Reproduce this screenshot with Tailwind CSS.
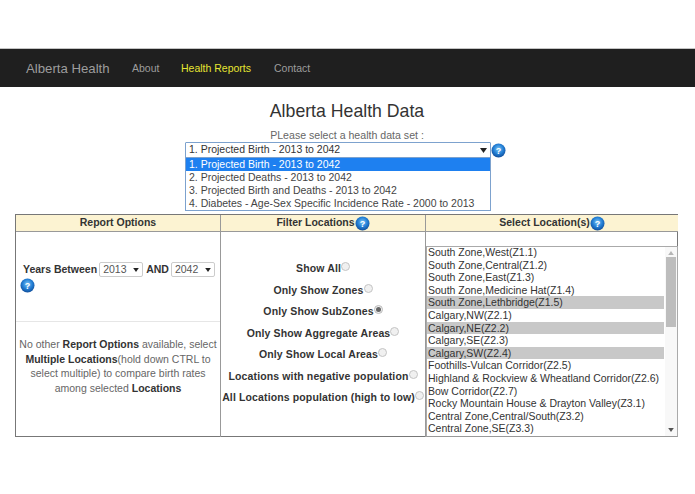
<!DOCTYPE html>
<html lang="en">
  <head>
    <meta charset="UTF-8" />
    <title>Alberta Health Data</title>
    <script src="https://cdn.jsdelivr.net/npm/@tailwindcss/browser@4"></script>
  </head>
  <body class="bg-white font-['Liberation_Sans',Arial,sans-serif] text-[#333] w-[695px] h-[494px] overflow-hidden">
    <!-- Navbar -->
    <nav class="mt-[48px] h-[39px] bg-[#1f1f1f] border-t border-[#c4c4c4] flex items-center pt-[1px] pl-[26px] text-[#9d9d9d] text-[10.5px]">
      <a class="text-[13.2px] w-[106px]">Alberta Health</a>
      <a class="w-[49px]">About</a>
      <a class="w-[93px] text-[#e6e632]">Health Reports</a>
      <a>Contact</a>
    </nav>

    <!-- Heading -->
    <h1 class="mt-[14px] text-center text-[17.7px] leading-[20px] pr-[1px]">Alberta Health Data</h1>
    <p class="mt-[8px] text-center text-[10.6px] leading-[13px] text-[#666] pr-[1px]">PLease select a health data set :</p>

    <!-- Data set select -->
    <div class="relative ml-[185px] h-[16px] w-[306px]">
      <div class="h-[16px] border border-[#7da2ce] rounded-t-[1px] flex items-center justify-between pl-[3px] pr-[3px] text-[10.5px] text-[#333]">
        <span>1. Projected Birth - 2013 to 2042</span>
        <svg width="7" height="5" viewBox="0 0 7 5"><path d="M0 0h7L3.5 5z" fill="#222" /></svg>
      </div>
      <svg class="absolute left-[306px] top-[1px]" width="15" height="15" viewBox="0 0 15 15">
        <defs>
          <radialGradient id="q1" cx="50%" cy="40%" r="62%"><stop offset="0%" stop-color="#7cc6f5" /><stop offset="55%" stop-color="#2480d6" /><stop offset="100%" stop-color="#0f4a96" /></radialGradient>
        </defs>
        <circle cx="7.5" cy="7.5" r="7" fill="url(#q1)" />
        <text x="7.5" y="10.5" text-anchor="middle" font-size="9" font-weight="700" font-family="Liberation Sans" fill="#fff">?</text>
      </svg>
      <ul class="absolute left-0 top-[15px] w-[306px] h-[54px] bg-white border border-[#7da2ce] text-[10.5px] leading-[13px] text-[#444]">
        <li class="h-[13px] pl-[3px] bg-[#1e80f0] text-white">1. Projected Birth - 2013 to 2042</li>
        <li class="h-[13px] pl-[3px]">2. Projected Deaths - 2013 to 2042</li>
        <li class="h-[13px] pl-[3px]">3. Projected Birth and Deaths - 2013 to 2042</li>
        <li class="h-[13px] pl-[3px]">4. Diabetes - Age-Sex Specific Incidence Rate - 2000 to 2013</li>
      </ul>
    </div>

    <!-- Main table -->
    <div class="mt-[56px] ml-[15px] w-[663px] h-[223px] border border-[#777] grid grid-cols-[205px_205px_1fr] grid-rows-[17px_1fr] text-[10.5px]">
      <!-- Header row -->
      <div class="bg-[#fcf3d2] border-b border-[#999] border-r flex items-center justify-center font-bold text-[#333]">Report Options</div>
      <div class="bg-[#fcf3d2] border-b border-[#999] border-r flex items-center justify-center font-bold text-[#333]">
        Filter Locations
        <svg width="15" height="15" viewBox="0 0 15 15">
          <circle cx="7.5" cy="7.5" r="7" fill="url(#q1)" />
          <text x="7.5" y="10.5" text-anchor="middle" font-size="9" font-weight="700" font-family="Liberation Sans" fill="#fff">?</text>
        </svg>
      </div>
      <div class="bg-[#fcf3d2] border-b border-[#999] flex items-center justify-center font-bold text-[#333]">
        Select Location(s)
        <svg width="15" height="15" viewBox="0 0 15 15">
          <circle cx="7.5" cy="7.5" r="7" fill="url(#q1)" />
          <text x="7.5" y="10.5" text-anchor="middle" font-size="9" font-weight="700" font-family="Liberation Sans" fill="#fff">?</text>
        </svg>
      </div>

      <!-- Report options -->
      <div class="border-r border-[#999] flex flex-col">
        <div class="h-[90px] border-b border-[#e6e6e6] pl-[6px] pt-[30px]">
          <div class="flex items-center pl-[1px] h-[15px] font-bold whitespace-nowrap">
            <span>Years Between</span>
            <span class="ml-[2px] w-[44px] h-[15px] border border-[#ccc] rounded-[2px] flex items-center justify-between px-[3px] font-normal text-[#555]">2013<svg width="6" height="4" viewBox="0 0 7 5"><path d="M0 0h7L3.5 5z" fill="#222" /></svg></span>
            <span class="ml-[3px]">AND</span>
            <span class="ml-[2px] w-[44px] h-[15px] border border-[#ccc] rounded-[2px] flex items-center justify-between px-[3px] font-normal text-[#555]">2042<svg width="6" height="4" viewBox="0 0 7 5"><path d="M0 0h7L3.5 5z" fill="#222" /></svg></span>
          </div>
          <svg class="mt-[1px] -ml-[2px]" width="15" height="15" viewBox="0 0 15 15">
            <circle cx="7.5" cy="7.5" r="7" fill="url(#q1)" />
            <text x="7.5" y="10.5" text-anchor="middle" font-size="9" font-weight="700" font-family="Liberation Sans" fill="#fff">?</text>
          </svg>
        </div>
        <p class="pt-[15px] text-center leading-[14.7px] text-[#666] whitespace-nowrap">
          No other <b class="text-[#333]">Report Options</b> available, select<br />
          <b class="text-[#333]">Multiple Locations</b>(hold down CTRL to<br />
          select multiple) to compare birth rates<br />
          among selected <b class="text-[#333]">Locations</b>
        </p>
      </div>

      <!-- Filter locations -->
      <div class="border-r border-[#999] pt-[29px] flex flex-col items-center gap-[6.5px] font-bold tracking-[0.13px] leading-[15px] text-[#333] whitespace-nowrap">
        <label class="flex items-start h-[15px]">Show All<span class="mt-[1px] w-[9px] h-[9px] rounded-full border border-[#c4c4c4] bg-[#f0f0f0]"></span></label>
        <label class="flex items-start h-[15px]">Only Show Zones<span class="mt-[1px] w-[9px] h-[9px] rounded-full border border-[#c4c4c4] bg-[#f0f0f0]"></span></label>
        <label class="flex items-start h-[15px]">Only Show SubZones<span class="mt-[1px] w-[9px] h-[9px] rounded-full border border-[#bbb] bg-[#f0f0f0] flex items-center justify-center"><span class="w-[5px] h-[5px] rounded-full bg-[#666]"></span></span></label>
        <label class="flex items-start h-[15px]">Only Show Aggregate Areas<span class="mt-[1px] w-[9px] h-[9px] rounded-full border border-[#c4c4c4] bg-[#f0f0f0]"></span></label>
        <label class="flex items-start h-[15px]">Only Show Local Areas<span class="mt-[1px] w-[9px] h-[9px] rounded-full border border-[#c4c4c4] bg-[#f0f0f0]"></span></label>
        <label class="flex items-start h-[15px]">Locations with negative population<span class="mt-[1px] w-[9px] h-[9px] rounded-full border border-[#c4c4c4] bg-[#f0f0f0]"></span></label>
        <label class="flex items-start h-[15px]">All Locations population (high to low)<span class="mt-[1px] w-[9px] h-[9px] rounded-full border border-[#c4c4c4] bg-[#f0f0f0]"></span></label>
      </div>

      <!-- Location list -->
      <div class="pt-[14px]">
        <div class="h-[191px] w-[252px] border border-[#aaa] border-b-[#999] flex text-[10.5px] leading-[12.6px] text-[#333]">
          <ul class="w-[237px] -mt-[1px] whitespace-nowrap">
            <li class="h-[12.6px] pl-[1px]">South Zone,West(Z1.1)</li>
            <li class="h-[12.6px] pl-[1px]">South Zone,Central(Z1.2)</li>
            <li class="h-[12.6px] pl-[1px]">South Zone,East(Z1.3)</li>
            <li class="h-[12.6px] pl-[1px]">South Zone,Medicine Hat(Z1.4)</li>
            <li class="h-[12.6px] pl-[1px] bg-[#c8c8c8]">South Zone,Lethbridge(Z1.5)</li>
            <li class="h-[12.6px] pl-[1px]">Calgary,NW(Z2.1)</li>
            <li class="h-[12.6px] pl-[1px] bg-[#c8c8c8]">Calgary,NE(Z2.2)</li>
            <li class="h-[12.6px] pl-[1px]">Calgary,SE(Z2.3)</li>
            <li class="h-[12.6px] pl-[1px] bg-[#c8c8c8]">Calgary,SW(Z2.4)</li>
            <li class="h-[12.6px] pl-[1px]">Foothills-Vulcan Corridor(Z2.5)</li>
            <li class="h-[12.6px] pl-[1px]">Highland &amp; Rockview &amp; Wheatland Corridor(Z2.6)</li>
            <li class="h-[12.6px] pl-[1px]">Bow Corridor(Z2.7)</li>
            <li class="h-[12.6px] pl-[1px]">Rocky Mountain House &amp; Drayton Valley(Z3.1)</li>
            <li class="h-[12.6px] pl-[1px]">Central Zone,Central/South(Z3.2)</li>
            <li class="h-[12.6px] pl-[1px]">Central Zone,SE(Z3.3)</li>
          </ul>
          <!-- Scrollbar -->
          <div class="w-[12px] ml-auto bg-[#f8f8f8] flex flex-col items-center">
            <svg class="mt-[4px]" width="6" height="4" viewBox="0 0 7 5"><path d="M3.5 0L7 5H0z" fill="#b5b5b5" /></svg>
            <div class="mt-[2px] w-[10px] h-[70px] bg-[#bdbdbd]"></div>
            <svg class="mt-auto mb-[4px]" width="6" height="4" viewBox="0 0 7 5"><path d="M0 0h7L3.5 5z" fill="#555" /></svg>
          </div>
        </div>
      </div>
    </div>
  </body>
</html>
